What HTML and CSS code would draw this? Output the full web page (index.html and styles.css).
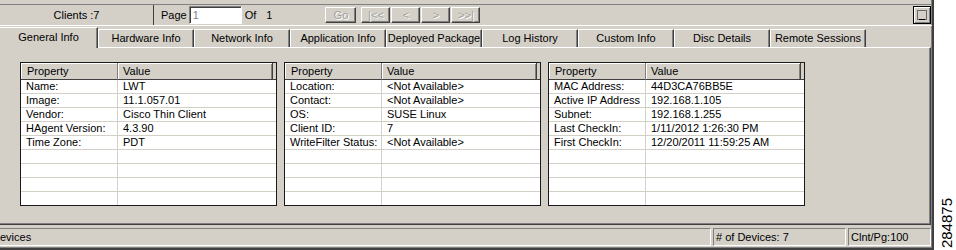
FILE: index.html
```html
<!DOCTYPE html>
<html lang="en">
<head>
  <meta charset="UTF-8" />
  <title>Client Details</title>
  <link rel="stylesheet" href="styles.css">
</head>
<body>
  <div class="screen">
    <div class="window">
      <div class="toolbar">
        <div class="clients">Clients :7</div>
        <span class="page-label">Page</span>
        <input class="page-input" type="text" value="1" />
        <span class="of-label">Of</span>
        <span class="of-total">1</span>
        <button class="nav-btn go" disabled>Go</button>
        <button class="nav-btn first" disabled>|&lt;&lt;</button>
        <button class="nav-btn" disabled>&lt;</button>
        <button class="nav-btn" disabled>&gt;</button>
        <button class="nav-btn" disabled>&gt;&gt;|</button>
        <button class="corner-btn">
          <svg width="12" height="12" viewBox="0 0 12 12">
            <rect x="1.5" y="1.5" width="9" height="9" fill="none" stroke="#000" stroke-dasharray="1 1"/>
            <line x1="3" y1="10.5" x2="9" y2="10.5" stroke="#000"/>
          </svg>
        </button>
      </div>

      <div class="tabs">
        <div class="tab active">General Info</div>
        <div class="tab">Hardware Info</div>
        <div class="tab">Network Info</div>
        <div class="tab">Application Info</div>
        <div class="tab">Deployed Package</div>
        <div class="tab">Log History</div>
        <div class="tab">Custom Info</div>
        <div class="tab">Disc Details</div>
        <div class="tab">Remote Sessions</div>
      </div>

      <div class="panel">
        <table class="grid">
          <colgroup><col class="c-prop"><col class="c-val"><col class="c-fill"></colgroup>
          <tr><th>Property</th><th>Value</th><th class="fill"></th></tr>
          <tr><td>Name:</td><td colspan="2">LWT</td></tr>
          <tr><td>Image:</td><td colspan="2">11.1.057.01</td></tr>
          <tr><td>Vendor:</td><td colspan="2">Cisco Thin Client</td></tr>
          <tr><td>HAgent Version:</td><td colspan="2">4.3.90</td></tr>
          <tr><td>Time Zone:</td><td colspan="2">PDT</td></tr>
          <tr><td></td><td colspan="2"></td></tr>
          <tr><td></td><td colspan="2"></td></tr>
          <tr><td></td><td colspan="2"></td></tr>
          <tr class="last"><td></td><td colspan="2"></td></tr>
        </table>

        <table class="grid">
          <colgroup><col class="c-prop"><col class="c-val"><col class="c-fill"></colgroup>
          <tr><th>Property</th><th>Value</th><th class="fill"></th></tr>
          <tr><td>Location:</td><td colspan="2">&lt;Not Available&gt;</td></tr>
          <tr><td>Contact:</td><td colspan="2">&lt;Not Available&gt;</td></tr>
          <tr><td>OS:</td><td colspan="2">SUSE Linux</td></tr>
          <tr><td>Client ID:</td><td colspan="2">7</td></tr>
          <tr><td>WriteFilter Status:</td><td colspan="2">&lt;Not Available&gt;</td></tr>
          <tr><td></td><td colspan="2"></td></tr>
          <tr><td></td><td colspan="2"></td></tr>
          <tr><td></td><td colspan="2"></td></tr>
          <tr class="last"><td></td><td colspan="2"></td></tr>
        </table>

        <table class="grid">
          <colgroup><col class="c-prop"><col class="c-val"><col class="c-fill"></colgroup>
          <tr><th>Property</th><th>Value</th><th class="fill"></th></tr>
          <tr><td>MAC Address:</td><td colspan="2">44D3CA76BB5E</td></tr>
          <tr><td>Active IP Address</td><td colspan="2">192.168.1.105</td></tr>
          <tr><td>Subnet:</td><td colspan="2">192.168.1.255</td></tr>
          <tr><td>Last CheckIn:</td><td colspan="2">1/11/2012 1:26:30 PM</td></tr>
          <tr><td>First CheckIn:</td><td colspan="2">12/20/2011 11:59:25 AM</td></tr>
          <tr><td></td><td colspan="2"></td></tr>
          <tr><td></td><td colspan="2"></td></tr>
          <tr><td></td><td colspan="2"></td></tr>
          <tr class="last"><td></td><td colspan="2"></td></tr>
        </table>
      </div>

      <div class="statusbar">
        <div class="status-cell main">evices</div>
        <div class="status-cell count"># of Devices: 7</div>
        <div class="status-cell per-page">Clnt/Pg:100</div>
      </div>
    </div>

    <div class="side">
      <span class="fig-no">284875</span>
    </div>
  </div>
</body>
</html>
```

FILE: styles.css
```css
* {
  box-sizing: border-box;
}
body {
  margin: 0;
  background-color: #fff;
  font-family: "Liberation Sans", Arial, sans-serif;
  font-size: 11px;
  color: #000;
}
.screen {
  display: flex;
  width: 956px;
  height: 250px;
  overflow: hidden;
}
.window {
  width: 934px;
  flex: none;
  display: flex;
  flex-direction: column;
  background-color: #d4d0c8;
  border-right: 2px solid #404040;
  border-bottom: 2px solid #404040;
  box-shadow: inset -1px -1px #808080;
}

/* toolbar */
.toolbar {
  margin-top: 4px;
  height: 22px;
  display: flex;
  align-items: center;
  border-top: 1px solid #808080;
  border-bottom: 1px solid #fff;
}
.clients {
  width: 154px;
  align-self: stretch;
  line-height: 20px;
  text-align: center;
  border-right: 1px solid #404040;
}
.page-label {
  margin-left: 7px;
}
.page-input {
  width: 53px;
  height: 18px;
  margin-left: 2px;
  padding: 0 0 0 3px;
  font: inherit;
  color: #808080;
  background-color: #fff;
  border: 1px solid;
  border-color: #808080 #fff #fff #808080;
  box-shadow: inset 1px 1px #404040;
}
.of-label {
  margin-left: 3px;
}
.of-total {
  margin-left: 10px;
}
.nav-btn {
  width: 29px;
  height: 16px;
  margin-left: 1px;
  padding: 0;
  font: inherit;
  color: #a0a0a0;
  text-shadow: 1px 1px #fff;
  background-color: #d4d0c8;
  border: 1px solid;
  border-color: #fff #404040 #404040 #fff;
  box-shadow: inset -1px -1px #808080;
}
.nav-btn.go {
  width: 31px;
  margin-left: 53px;
}
.nav-btn.first {
  margin-left: 5px;
}
.corner-btn {
  width: 18px;
  height: 18px;
  margin-left: auto;
  margin-right: 1px;
  padding: 0;
  display: flex;
  align-items: center;
  justify-content: center;
  background-color: #d4d0c8;
  border: 1px solid #000;
  box-shadow: inset 1px 1px #fff, inset -1px -1px #808080;
}

/* tabs */
.tabs {
  height: 21px;
  display: flex;
  align-items: flex-end;
}
.tab {
  width: 96px;
  height: 18px;
  line-height: 16px;
  text-align: center;
  white-space: nowrap;
  overflow: hidden;
  border-top: 1px solid #fff;
  border-left: 1px solid #fff;
  border-right: 1px solid #404040;
  box-shadow: inset -1px 0 #808080;
}
.tab.active {
  width: 98px;
  height: 21px;
  margin-bottom: -1px;
  padding-top: 1px;
  border-left: none;
  background-color: #d4d0c8;
  position: relative;
  z-index: 1;
}

/* tab panel */
.panel {
  height: 178px;
  margin-right: 1px;
  padding: 14px 0 0 20px;
  display: flex;
  align-items: flex-start;
  gap: 7px;
  border-top: 1px solid #fff;
  border-right: 1px solid #404040;
  border-bottom: 1px solid #404040;
  box-shadow: inset -1px -1px #808080;
}
.grid {
  width: 257px;
  table-layout: fixed;
  border-collapse: separate;
  border-spacing: 0;
  border: 1px solid #1a1a1a;
  background-color: #fff;
}
.c-prop {
  width: 97px;
}
.c-fill {
  width: 3px;
}
.grid th {
  height: 17px;
  padding: 0 0 0 6px;
  font-weight: normal;
  text-align: left;
  background-color: #d4d0c8;
  border-right: 1px solid #808080;
  border-bottom: 1px solid #404040;
  box-shadow: inset 1px 1px #fff;
}
.grid th:nth-child(2) {
  padding-left: 5px;
  border-right: 1px solid #404040;
  box-shadow: inset 1px 1px #fff, inset -1px 0 #808080;
}
.grid th.fill {
  padding: 0;
  border-right: none;
  box-shadow: none;
}
.grid td {
  height: 14px;
  padding: 0 0 0 5px;
  line-height: 13px;
  white-space: nowrap;
  overflow: hidden;
  border-bottom: 1px solid #d4d0c8;
}
.grid td:first-child {
  border-right: 1px solid #d4d0c8;
}
.grid tr.last td {
  height: 13px;
  border-bottom: none;
}

/* status bar */
.statusbar {
  height: 23px;
  padding: 3px 1px 2px 0;
  display: flex;
  gap: 2px;
}
.status-cell {
  height: 18px;
  padding-left: 2px;
  line-height: 16px;
  white-space: nowrap;
  overflow: hidden;
  border: 1px solid;
  border-color: #808080 #fff #fff #808080;
}
.status-cell.main {
  width: 711px;
  padding-left: 0;
  border-left: none;
}
.status-cell.count {
  width: 133px;
}
.status-cell.per-page {
  flex: 1;
}

/* figure number at the right margin */
.side {
  flex: 1;
  display: flex;
  align-items: flex-end;
  justify-content: center;
  padding: 0 0 2px 3px;
}
.fig-no {
  writing-mode: vertical-rl;
  transform: rotate(180deg);
  font-size: 15px;
  line-height: 15px;
}
```
